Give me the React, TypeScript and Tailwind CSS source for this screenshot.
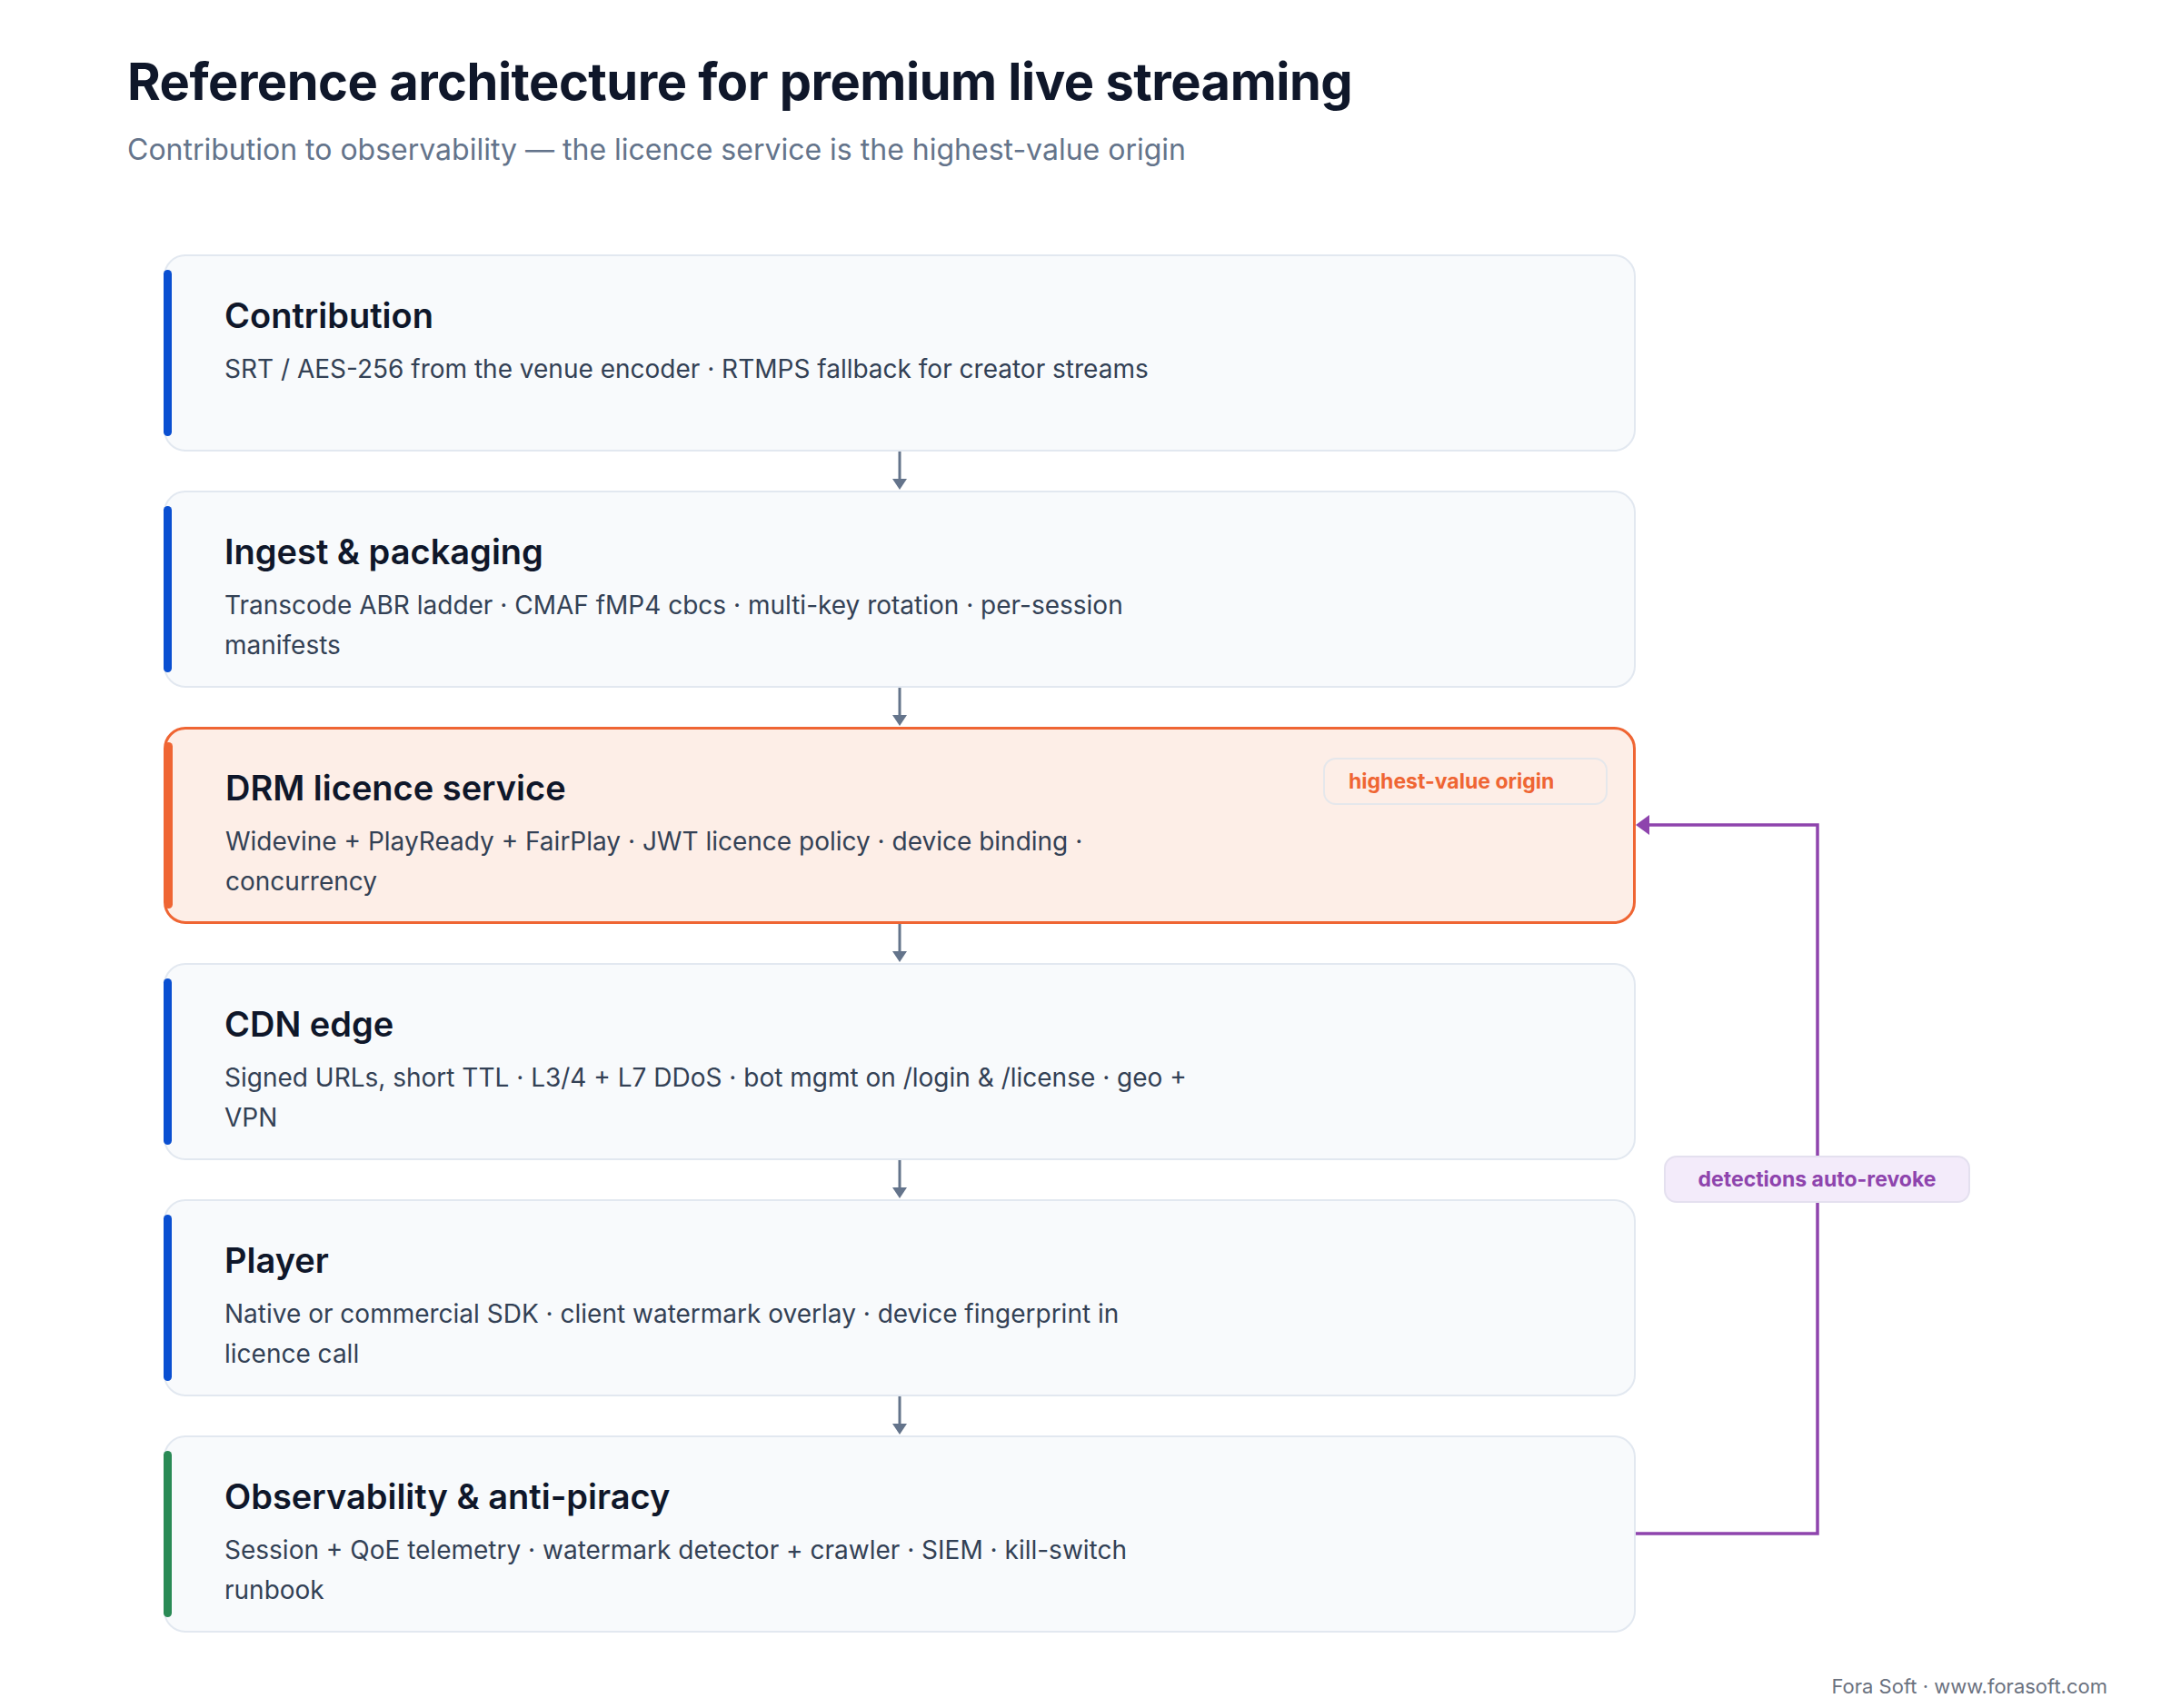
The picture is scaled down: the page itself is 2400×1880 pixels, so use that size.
import React from "react";

type Stage = { title: string; body: string; color: string; hot?: boolean };

const stages: Stage[] = [
  { title: "Contribution", body: "SRT / AES-256 from the venue encoder · RTMPS fallback for creator streams", color: "bg-[#0a4fd1]" },
  { title: "Ingest & packaging", body: "Transcode ABR ladder · CMAF fMP4 cbcs · multi-key rotation · per-session manifests", color: "bg-[#0a4fd1]" },
  { title: "DRM licence service", body: "Widevine + PlayReady + FairPlay · JWT licence policy · device binding · concurrency", color: "bg-[#ef6533]", hot: true },
  { title: "CDN edge", body: "Signed URLs, short TTL · L3/4 + L7 DDoS · bot mgmt on /login & /license · geo + VPN", color: "bg-[#0a4fd1]" },
  { title: "Player", body: "Native or commercial SDK · client watermark overlay · device fingerprint in licence call", color: "bg-[#0a4fd1]" },
  { title: "Observability & anti-piracy", body: "Session + QoE telemetry · watermark detector + crawler · SIEM · kill-switch runbook", color: "bg-[#2a8a55]" },
];

function Arrow() {
  return (
    <div className="flex h-[43px] w-[1620px] justify-center">
      <svg width="20" height="43" viewBox="0 0 20 43">
        <line x1="10" y1="0" x2="10" y2="32" stroke="#64748b" strokeWidth="3" />
        <polygon points="2,30 18,30 10,42" fill="#64748b" />
      </svg>
    </div>
  );
}

function Card({ s }: { s: Stage }) {
  return (
    <div
      className={
        s.hot
          ? "relative flex h-[217px] w-[1620px] rounded-[24px] border-[3px] border-[#ef6533] bg-[#fdeee7] py-[14px]"
          : "relative flex h-[217px] w-[1620px] rounded-[24px] border-2 border-[#e2e8f0] bg-[#f8fafc] py-[15px]"
      }
    >
      <div className={`ml-[-2px] w-[9px] shrink-0 rounded-full ${s.color}`} />
      <div className="pl-[58px] pt-[27px]">
        <div className="text-[38px] font-semibold leading-[46px] text-[#0f172a]">{s.title}</div>
        <div className="mt-[14px] w-[1062px] text-[28px] leading-[44px] text-[#334155]">{s.body}</div>
      </div>
      {s.hot && (
        <div className="absolute right-[28px] top-[31px] flex h-[52px] w-[313px] items-center rounded-[14px] border-2 border-[#e5e7eb] bg-[#fdeee7] pl-[26px] text-[23px] font-bold text-[#ef6533]">
          highest-value origin
        </div>
      )}
    </div>
  );
}

export default function App() {
  return (
    <div
      className="relative h-[1880px] w-[2400px] bg-white px-[140px] pt-[57px]"
      style={{ fontFamily: "Inter, 'Noto Sans', sans-serif" }}
    >
      <h1 className="text-[56px] font-bold leading-[67px] tracking-[-0.5px] text-[#0f172a]">
        Reference architecture for premium live streaming
      </h1>
      <p className="mt-[21px] text-[32px] leading-[40px] text-[#64748b]">
        Contribution to observability — the licence service is the highest-value origin
      </p>
      <div className="ml-[40px] mt-[95px] flex flex-col">
        {stages.map((s, i) => (
          <React.Fragment key={s.title}>
            {i > 0 && <Arrow />}
            <Card s={s} />
          </React.Fragment>
        ))}
      </div>
      <svg className="pointer-events-none absolute left-0 top-0" width="2400" height="1880">
        <path d="M1800 1688 H2000 V908 H1812" fill="none" stroke="#8e44ad" strokeWidth="3.5" />
        <polygon points="1800,908 1815,897 1815,919" fill="#8e44ad" />
      </svg>
      <div className="absolute left-[1831px] top-[1272px] flex h-[52px] w-[337px] items-center justify-center rounded-[14px] border-2 border-[#e4e0ef] bg-[#f3ebfa] text-[23px] font-bold text-[#8e44ad]">
        detections auto-revoke
      </div>
      <div className="absolute right-[81px] top-[1842px] text-[22px] leading-[28px] text-[#6b7280]">
        Fora Soft · www.forasoft.com
      </div>
    </div>
  );
}
